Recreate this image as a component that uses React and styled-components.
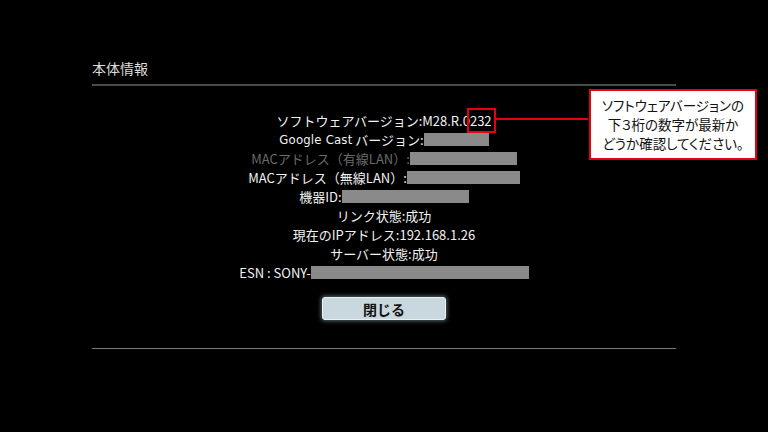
import React from "react";
import styled, { createGlobalStyle } from "styled-components";

const GlobalStyle = createGlobalStyle`
	html, body {
		margin: 0;
		padding: 0;
		background: #000;
	}
	* {
		box-sizing: border-box;
	}
`;

const Screen = styled.main`
	position: relative;
	width: 768px;
	height: 432px;
	overflow: hidden;
	background: #000;
	font-family: "Noto Sans CJK JP", "Noto Sans", sans-serif;
	color: #f2f2f2;
	padding: 58px 92px 0;
`;

const Title = styled.h1`
	margin: 0;
	font-size: 14px;
	line-height: 20px;
	font-weight: 400;
	color: #dcdcdc;
`;

const Divider = styled.hr`
	margin: ${(p) => p.$gap}px 0 0;
	border: none;
	height: ${(p) => p.$thick}px;
	background: ${(p) => p.$color};
`;

const InfoList = styled.ul`
	list-style: none;
	margin: 25px 0 0;
	padding: 0;
	display: flex;
	flex-direction: column;
	align-items: center;
`;

const InfoRow = styled.li`
	display: flex;
	align-items: center;
	height: 19px;
	font-size: 13px;
	line-height: 19px;
	white-space: nowrap;
	color: ${(p) => (p.$dim ? "#6b6b6b" : "#f2f2f2")};
`;

const Condensed = styled.span`
	font-family: "DejaVu Sans Condensed", "Noto Sans CJK JP", sans-serif;
	letter-spacing: 0.2px;
`;

const Masked = styled.span`
	display: inline-block;
	width: ${(p) => p.$w}px;
	height: 13px;
	background: #8a8a8a;
`;

const Marked = styled.span`
	position: relative;

	&::before {
		content: "";
		position: absolute;
		left: -3px;
		right: -4px;
		top: -3px;
		bottom: -3px;
		border: 2px solid #e60012;
	}

	&::after {
		content: "";
		position: absolute;
		left: calc(100% + 4px);
		top: 7px;
		width: 92px;
		height: 2px;
		background: #e60012;
	}
`;

const ButtonRow = styled.div`
	display: flex;
	justify-content: center;
	margin-top: 15px;
`;

const CloseButton = styled.button`
	width: 124px;
	height: 23px;
	border: 1px solid #e8f2f4;
	border-radius: 3px;
	background: #c9d8de;
	box-shadow: 0 0 4px 1px rgba(190, 230, 230, 0.45);
	font-family: "Noto Sans CJK JP", sans-serif;
	font-size: 14px;
	font-weight: 700;
	line-height: 20px;
	color: #111;
	padding: 0;
`;

const Callout = styled.div`
	position: absolute;
	left: 589px;
	top: 89px;
	width: 168px;
	height: 71px;
	border: 2px solid #e60012;
	background: #fff;
	color: #111;
	font-size: 13.5px;
	line-height: 19px;
	text-align: center;
	padding-top: 5px;
	font-feature-settings: "palt";
	white-space: nowrap;
`;

const App = () => {
	return (
		<>
			<GlobalStyle />
			<Screen>
				<Title>本体情報</Title>
				<Divider $gap={6} $thick={2} $color="#4a4a4a" />
				<InfoList>
					<InfoRow>
						ソフトウェアバージョン:M28.R.0<Marked>232</Marked>
					</InfoRow>
					<InfoRow>
						<Condensed>Google Cast</Condensed>&nbsp;バージョン:
						<Masked $w={65} />
					</InfoRow>
					<InfoRow $dim>
						MACアドレス（有線LAN）:
						<Masked $w={107} />
					</InfoRow>
					<InfoRow>
						MACアドレス（無線LAN）:
						<Masked $w={113} />
					</InfoRow>
					<InfoRow>
						機器ID:
						<Masked $w={127} />
					</InfoRow>
					<InfoRow>リンク状態:成功</InfoRow>
					<InfoRow>現在のIPアドレス:192.168.1.26</InfoRow>
					<InfoRow>サーバー状態:成功</InfoRow>
					<InfoRow>
						ESN : SONY-
						<Masked $w={218} />
					</InfoRow>
				</InfoList>
				<ButtonRow>
					<CloseButton>閉じる</CloseButton>
				</ButtonRow>
				<Divider $gap={28} $thick={1} $color="#7a7a7a" />
				<Callout>
					ソフトウェアバージョンの
					<br />
					下３桁の数字が最新か
					<br />
					どうか確認してください。
				</Callout>
			</Screen>
		</>
	);
};

export default App;
